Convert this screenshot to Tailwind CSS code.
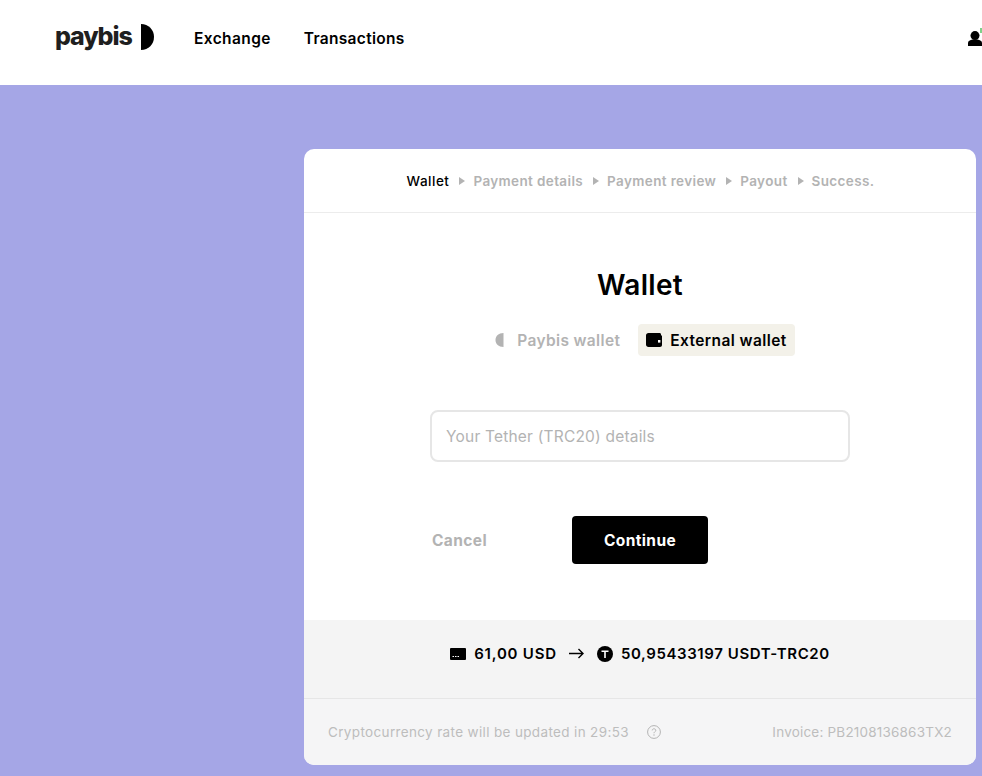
<!DOCTYPE html>
<html lang="en">
<head>
  <meta charset="UTF-8">
  <title>Paybis - Wallet</title>
  <script src="https://cdn.jsdelivr.net/npm/@tailwindcss/browser@4"></script>
</head>
<body class="h-[776px] overflow-hidden bg-[#a5a6e6] font-['Inter',sans-serif]">
  <!-- header -->
  <header class="flex h-[85px] items-center overflow-hidden bg-white pb-[8px] pl-[55px]">
    <a class="-mt-[3px] flex w-[139px] items-center">
      <span class="pb-[2px] text-[25px] font-extrabold leading-none tracking-[-1.1px] text-[#1f1f1f]">paybis</span>
      <svg class="ml-[9px]" width="13" height="26" viewBox="0 0 13 26"><path d="M0 0C7.5 0 13 5.6 13 13S7.5 26 0 26Z" fill="#000"/></svg>
    </a>
    <a class="text-[15.5px] font-semibold tracking-[0.4px] text-black">Exchange</a>
    <a class="ml-[33px] text-[15.5px] font-semibold tracking-[0.3px] text-black">Transactions</a>
    <div class="relative ml-auto h-[15px] w-[14px]">
      <svg class="absolute top-0 left-0" width="14" height="15" viewBox="0 0 14 15"><circle cx="7" cy="4.6" r="4.5" fill="#000"/><path d="M0 15V12C0 10 2 9.2 4.5 8.6H9.5C12 9.2 14 10 14 12V15Z" fill="#000"/></svg>
      <span class="absolute top-[-3px] left-[12px] h-[5px] w-[2px] bg-[#7fd18a]"></span>
    </div>
  </header>

  <main class="pt-[64px] pl-[304px]">
    <section class="flex h-[616px] w-[672px] flex-col overflow-hidden rounded-[10px] bg-white">
      <!-- steps -->
      <div class="flex h-[64px] shrink-0 items-center justify-center border-b border-[#ececec] pt-[1px] pl-[1px] text-[13.5px] font-semibold tracking-[0.37px] text-[#b3b3b3]">
        <span class="font-medium tracking-[0.5px] text-black">Wallet</span>
        <svg class="mr-[8px] ml-[10px]" width="6" height="8" viewBox="0 0 6 8"><path d="M0 0L6 4L0 8Z" fill="#b3b3b3"/></svg>
        <span>Payment details</span>
        <svg class="mr-[8px] ml-[10px]" width="6" height="8" viewBox="0 0 6 8"><path d="M0 0L6 4L0 8Z" fill="#b3b3b3"/></svg>
        <span>Payment review</span>
        <svg class="mr-[8px] ml-[10px]" width="6" height="8" viewBox="0 0 6 8"><path d="M0 0L6 4L0 8Z" fill="#b3b3b3"/></svg>
        <span>Payout</span>
        <svg class="mr-[8px] ml-[10px]" width="6" height="8" viewBox="0 0 6 8"><path d="M0 0L6 4L0 8Z" fill="#b3b3b3"/></svg>
        <span>Success.</span>
      </div>

      <!-- form -->
      <div class="flex h-[407px] shrink-0 flex-col items-center">
        <h1 class="mt-[55px] text-[28px] font-semibold leading-[34px] tracking-[0.3px] text-black">Wallet</h1>
        <div class="mt-[22px] ml-[10px] flex h-[32px] items-center text-[15.5px] font-semibold">
          <button class="flex items-center pr-[18px] tracking-[0.35px] text-[#b3b3b3]">
            <svg width="9" height="14" viewBox="0 0 9 14"><path d="M8.5 0V14C3.5 14 0.5 11 0.5 7S3.5 0 8.5 0Z" fill="#b3b3b3"/></svg>
            <span class="ml-[13px] pt-[1px]">Paybis wallet</span>
          </button>
          <button class="flex h-[32px] items-center rounded-[4px] bg-[#f3f1e9] px-[8px] tracking-[0.42px] text-black">
            <svg width="16" height="14" viewBox="0 0 16 14"><path d="M2.5 0H13.5C14.5 0 15 .6 15 1.5V2.5H16V12C16 13.2 15.2 14 14 14H2.5C1 14 0 13 0 11.5V2.5C0 1 1 0 2.5 0Z" fill="#000"/><rect x="12" y="7" width="2.4" height="2.6" fill="#fff"/></svg>
            <span class="ml-[8px] pt-[1px]">External wallet</span>
          </button>
        </div>
        <input class="mt-[54px] h-[52px] w-[420px] rounded-[8px] border-2 border-[#e6e6e6] px-[14px] text-[15.5px] tracking-[0.2px] placeholder:text-[#b3b3b3]" placeholder="Your Tether (TRC20) details">
        <div class="mt-[54px] flex w-[420px] items-center">
          <button class="w-[142px] pt-[1px] pl-[2px] text-left text-[15.5px] font-bold tracking-[0.4px] text-[#b3b3b3]">Cancel</button>
          <button class="h-[48px] w-[136px] rounded-[4px] bg-black pt-[1px] text-[15.5px] font-bold tracking-[0.4px] text-white">Continue</button>
        </div>
      </div>

      <!-- amounts -->
      <div class="flex h-[79px] shrink-0 items-center justify-center border-b border-[#e6e6e6] bg-[#f4f4f4] pb-[9px] text-[15px] font-semibold tracking-[0.6px] text-black">
        <svg class="mb-[1px]" width="16" height="12" viewBox="0 0 16 12"><rect width="16" height="12" rx="1" fill="#000"/><path d="M2.5 8.5H4M5 8.5H6.5M7.5 8.5H9" stroke="#fff" stroke-width="1"/></svg>
        <span class="ml-[8px] tracking-[0.8px]">61,00 USD</span>
        <svg class="mr-[13px] mb-[3px] ml-[12px]" width="15" height="11" viewBox="0 0 15 11"><path d="M0 5.5H14M9.5 1L14 5.5L9.5 10" fill="none" stroke="#000" stroke-width="1.4"/></svg>
        <svg class="mb-[1px]" width="16" height="16" viewBox="0 0 16 16"><circle cx="8" cy="8" r="8" fill="#000"/><path d="M4.5 4.5H11.5V6H8.8V12H7.2V6H4.5Z" fill="#fff"/></svg>
        <span class="ml-[8px]">50,95433197 USDT-TRC20</span>
      </div>

      <!-- footer -->
      <div class="flex flex-1 items-center bg-[#f5f5f6] px-[24px] pt-[1px] text-[13.5px] text-[#bdbdbd]">
        <span class="tracking-[0.35px]">Cryptocurrency rate will be updated in 29:53</span>
        <svg class="mb-[2px] ml-[18px]" width="14" height="14" viewBox="0 0 14 14"><circle cx="7" cy="7" r="6.4" fill="none" stroke="#b3b3b3"/><path d="M5.2 5.4C5.2 4.4 6 3.8 7 3.8S8.8 4.4 8.8 5.4C8.8 6.6 7 6.7 7 8.2" fill="none" stroke="#b3b3b3"/><circle cx="7" cy="10" r=".7" fill="#b3b3b3"/></svg>
        <span class="ml-auto tracking-[0.2px]">Invoice: PB2108136863TX2</span>
      </div>
    </section>
  </main>
</body>
</html>
